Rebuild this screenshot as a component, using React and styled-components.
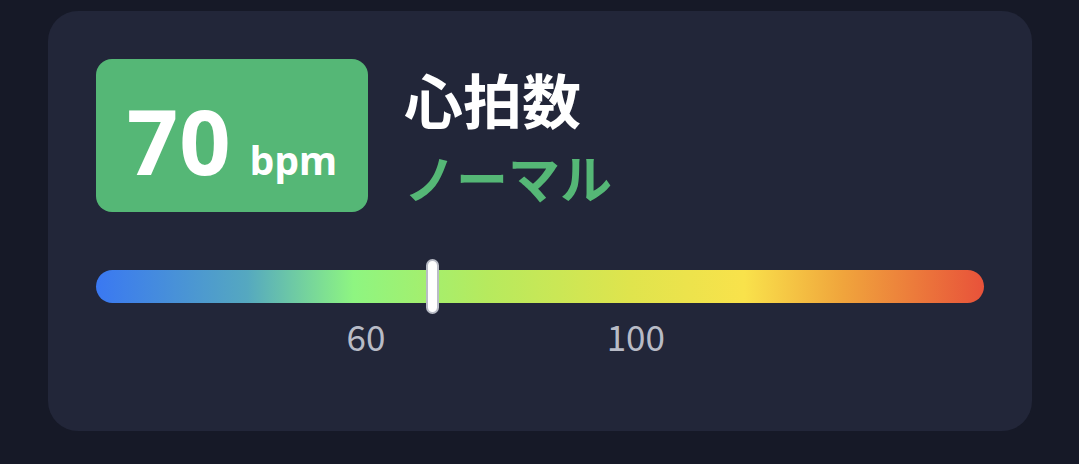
import React from 'react';
import styled, {createGlobalStyle} from 'styled-components';

const GlobalStyle = createGlobalStyle`
  html, body {
    margin: 0;
    padding: 0;
    background: #161927;
  }
  body {
    font-family: "Noto Sans CJK JP", "Noto Sans", sans-serif;
  }
`;

const Page = styled.div`
  padding: 11px 47px 33px 48px;
`;

const Card = styled.div`
  background: #222639;
  border-radius: 30px;
  height: 420px;
  box-sizing: border-box;
  padding: 48px;
`;

const Header = styled.div`
  display: flex;
  align-items: flex-start;
  gap: 36px;
  height: 153px;
`;

const ValueBox = styled.div`
  width: 272px;
  height: 153px;
  border-radius: 16px;
  background: #55b776;
  display: flex;
  align-items: center;
  justify-content: center;
  color: #fff;
  font-family: "Noto Sans", sans-serif;
  font-weight: 700;
`;

const ValueLine = styled.div`
  display: flex;
  align-items: baseline;
  gap: 18px;
  padding-top: 8px;
`;

const Number = styled.span`
  font-size: 90px;
  line-height: 1;
  letter-spacing: 1px;
`;

const Unit = styled.span`
  font-size: 39px;
  line-height: 1;
`;

const Labels = styled.div`
  display: flex;
  flex-direction: column;
  margin-top: 1px;
`;

const Title = styled.div`
  color: #ffffff;
  font-size: 59px;
  font-weight: 700;
  line-height: 78px;
`;

const Status = styled.div`
  color: #55b776;
  font-size: 52px;
  font-weight: 700;
  line-height: 78px;
`;

const Scale = styled.div`
  position: relative;
  margin-top: 58px;
  height: 90px;
`;

const Bar = styled.div`
  height: 33px;
  border-radius: 17px;
  background: linear-gradient(90deg,
    #3a78f2 0%,
    #55a8c0 17%,
    #8ef581 29%,
    #b6ea5e 44%,
    #dfe44d 60%,
    #f9e24b 73%,
    #f0a53c 84%,
    #e8523a 100%);
`;

const Marker = styled.div`
  position: absolute;
  top: -11px;
  width: 9px;
  height: 51px;
  margin-left: -7px;
  background: #fff;
  border: 2px solid #b9bcc6;
  border-radius: 7px;
`;

const Tick = styled.span`
  position: absolute;
  top: 48px;
  transform: translateX(-50%);
  color: #b8bbc6;
  font-family: "Noto Sans CJK JP", sans-serif;
  font-weight: 400;
  font-size: 35px;
  line-height: 1;
`;

const MIN = 20;
const MAX = 151.6;
const pct = v => `${((v - MIN) / (MAX - MIN)) * 100}%`;

export default function App() {
  const bpm = 70;
  return (
    <>
      <GlobalStyle/>
      <Page>
        <Card>
          <Header>
            <ValueBox>
              <ValueLine>
                <Number>{bpm}</Number>
                <Unit>bpm</Unit>
              </ValueLine>
            </ValueBox>
            <Labels>
              <Title>心拍数</Title>
              <Status>ノーマル</Status>
            </Labels>
          </Header>
          <Scale>
            <Bar/>
            <Marker style={{left: pct(bpm)}}/>
            <Tick style={{left: pct(60)}}>60</Tick>
            <Tick style={{left: pct(100)}}>100</Tick>
          </Scale>
        </Card>
      </Page>
    </>
  );
}
